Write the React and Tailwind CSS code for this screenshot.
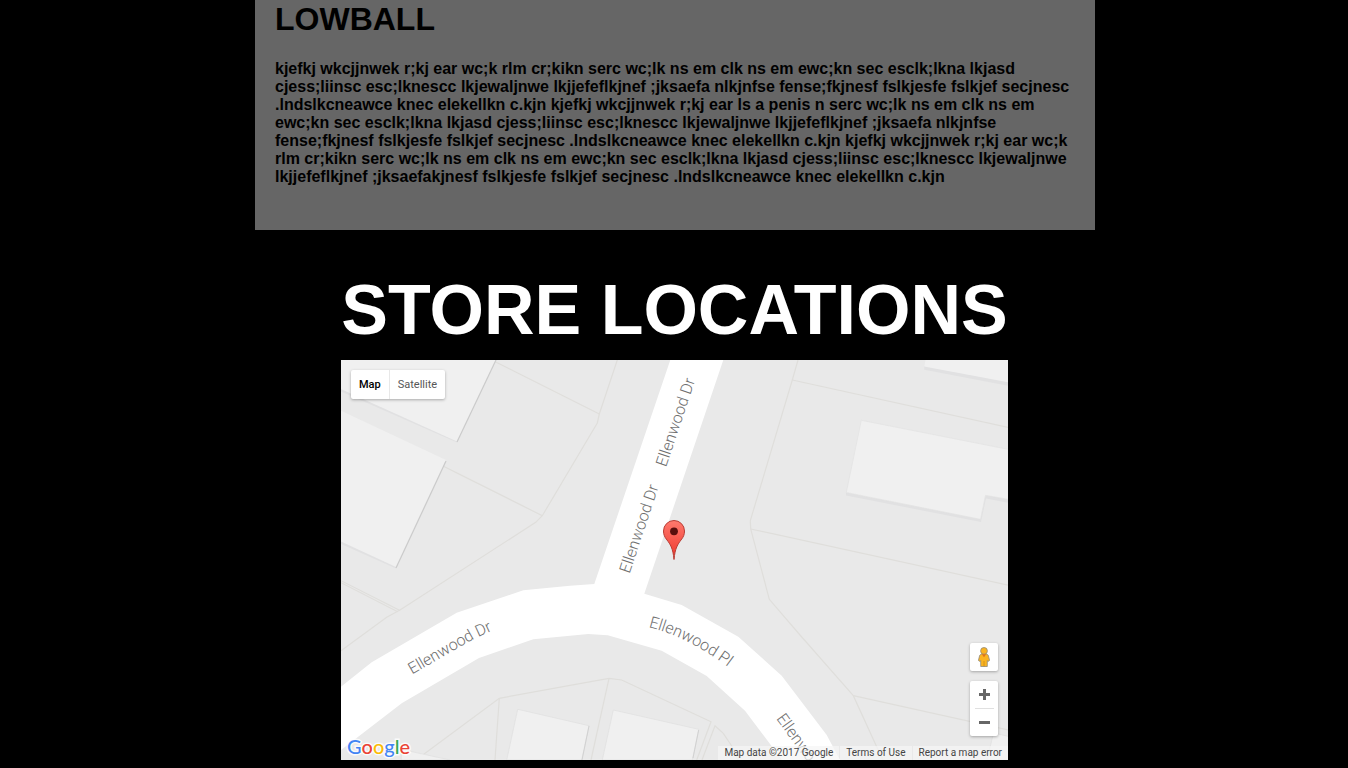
const PARCELS = [
  'M154.7 2 L258.3 54',
  'M276.3 0 L258.3 54 L256.3 63 L201.3 155.7 L194.7 162.3 L59 250 L45.7 257.3 L0 290.7',
  'M88 99 L201.3 155.7',
  'M0 220.7 L59 250.5',
  'M0 222.7 L56.7 251.7',
  'M457 0 L451.3 20 L409.3 160.7 L409.7 169 L428.3 239.3 L459 275 L512.3 335.7 L535.7 386.7 L542 400',
  'M451.3 20 L668 67.5',
  'M409.7 169 L668 225.3',
  'M512.3 335.7 L668 370',
  'M75 400 L158.3 338.3 L229 325.3 L268 318.3 L280.7 320 L370 361.7 L355.7 400',
  'M158.3 338.3 L154 400',
  'M268 318.3 L250 400',
  'M361 400 L374 365.7 L382.3 373.3 L390.7 386 L397 400',
];

function MapCanvas() {
  return (
    <svg
      className="block h-full w-full"
      viewBox="0 0 667 400"
      preserveAspectRatio="xMidYMid slice"
      role="img"
      aria-label="Street map around Ellenwood Dr"
    >
      <defs>
        <linearGradient id="pin" x1="0" y1="0" x2="0" y2="1">
          <stop offset="0" stopColor="#ff7a6e" />
          <stop offset="1" stopColor="#ee352b" />
        </linearGradient>
        <path id="road-west" d="M71 314.5 L131 280 L160 266.500" />
        <path id="road-place" d="M307.500 267 Q348 277 391 310" />
      </defs>
      <rect width="668" height="400" fill="#e9e9e9" />

      <g fill="none" stroke="#dfdedb" strokeWidth="1.2">
        {PARCELS.map((d) => (
          <path key={d} d={d} />
        ))}
      </g>

      <g fill="#e1e1e2">
        <path d="M0 29 L116 80 V82.5 L0 31.5Z" />
        <path d="M0 181 L55 206 V208.5 L0 184Z" />
        <path d="M583.3 6 L668 22 V26 L583.3 9.7Z" />
        <path d="M505 132 L639.500 159 L644.500 135 L668 139.5 V143 L645 138.5 L640 162 L505 135.500Z" />
      </g>
      <g fill="#f0f0f0">
        <path d="M0 0 H155 L116 81.5 L0 29Z" />
        <path d="M0 50.7 L105 100 L55 207 L0 181.5Z" />
        <path d="M584.5 0 H668 V22.5 L583.3 6.5Z" />
        <path d="M520.3 60.3 L668 89.5 V139.5 L644.500 135.3 L639.500 159.3 L505.3 132.5Z" stroke="#e2e2e2" strokeWidth=".7" />
        <path d="M176.7 349.3 L248 365.7 L240.7 400 H165.7Z" stroke="#e0e0e0" strokeWidth=".7" />
        <path d="M272.3 350 L357.7 369.3 L351.3 400 H261.3Z" stroke="#e0e0e0" strokeWidth=".7" />
        <path d="M61 389.5 L109 400 H60Z" stroke="#e0e0e0" strokeWidth=".7" />
        <path d="M652.5 373 L668 376.5 V400 H646Z" stroke="#e0e0e0" strokeWidth=".7" />
      </g>
      <g stroke="#cbcbcb" fill="none" strokeWidth="1.2">
        <path d="M155 0 L116 82" />
        <path d="M105 101 L55 208" />
        <path d="M248 366 L241 400" strokeWidth=".8" />
        <path d="M357.7 370 L352 398" strokeWidth=".8" />
      </g>

      <path
        fill="#fff"
        d="M329.3 0 H382.3 L303.3 233.7 L340.7 245 L397.3 276.7 L440.7 315.7 L485.7 375 L499 400 H441 L404 350.7 L365.7 316 L320.7 290.7 L266.7 275.3 L247.3 274 L192.3 279.3 L138 298 L60.7 343.3 L0 390 V326.7 L30.7 302.3 L115.7 252.7 L182.3 230.3 L229 225.7 L253.3 224Z"
      />

      <g fill="#6f6f6f" fontFamily="Roboto, sans-serif" fontSize="16" fontWeight="300">
        <text transform="translate(325 107.5) rotate(-71.5)">Ellenwood Dr</text>
        <text transform="translate(288.5 214) rotate(-71.5)">Ellenwood Dr</text>
        <text>
          <textPath href="#road-west">Ellenwood Dr</textPath>
        </text>
        <text>
          <textPath href="#road-place">Ellenwood Pl</textPath>
        </text>
        <text transform="translate(435 358.5) rotate(54)">Ellenwo</text>
      </g>

      <path
        d="M333 199.5 C332 188 329 184 326 180 C323.5 177 322.5 174.500 322.500 171 A10.500 10.500 0 0 1 343.500 171 C343.500 174.500 342.500 177 340 180 C337 184 334 188 333 199.500Z"
        fill="url(#pin)"
        stroke="#b93c34"
        strokeWidth="1"
      />
      <circle cx="333" cy="171.300" r="3.900" fill="#590f0d" />
    </svg>
  );
}

function Pegman() {
  return (
    <svg className="h-5 w-3" viewBox="0 0 12 20" aria-hidden="true">
      <path
        d="M3.300 7 H8.700 L10.300 8.300 L11.600 13.500 L9.800 14.500 L9.300 13.500 V19.500 H2.700 V13.500 L2.200 14.500 L.4 13.500 L1.700 8.300Z"
        fill="#fbb41f"
        stroke="#8f8a80"
        strokeWidth=".8"
      />
      <circle cx="6" cy="3.900" r="3.400" fill="#fbb41f" stroke="#8f8a80" strokeWidth=".8" />
      <path d="M3.800 7.300 H8.200 L6 10.200Z" fill="#e2741b" />
      <path d="M6 14 V19.500" stroke="#c98a1c" strokeWidth=".8" />
    </svg>
  );
}

function StoreMap() {
  return (
    <div className="relative h-[400px] w-full overflow-hidden bg-[#e9e9e9] font-[Roboto,sans-serif]">
      <MapCanvas />

      <div className="absolute top-2.5 left-2.5 flex h-[29px] rounded-xs bg-white text-[11px] shadow-[0_1px_3px_rgba(0,0,0,0.3)]">
        <button type="button" className="border-r border-[#e8e8e8] px-2 pt-px font-medium text-black">
          Map
        </button>
        <button type="button" className="px-2 pt-px text-[#565656]">
          Satellite
        </button>
      </div>

      <div className="absolute right-2.5 bottom-6 flex flex-col gap-2.5">
        <button
          type="button"
          aria-label="Street View"
          className="flex size-7 items-center justify-center rounded-xs bg-white shadow-[0_1px_3px_rgba(0,0,0,0.3)]"
        >
          <Pegman />
        </button>
        <div className="flex w-7 flex-col items-center rounded-xs bg-white shadow-[0_1px_3px_rgba(0,0,0,0.3)]">
          <button type="button" aria-label="Zoom in" className="flex h-[27px] w-full items-center justify-center">
            <svg className="size-[11px]" viewBox="0 0 11 11" aria-hidden="true">
              <path d="M4 0h3v4h4v3H7v4H4V7H0V4h4z" fill="#666" />
            </svg>
          </button>
          <span className="h-px w-[19px] bg-[#e0e0e0]" />
          <button type="button" aria-label="Zoom out" className="flex h-[27px] w-full items-center justify-center">
            <svg className="size-[11px]" viewBox="0 0 11 11" aria-hidden="true">
              <path d="M0 4h11v3H0z" fill="#666" />
            </svg>
          </button>
        </div>
      </div>

      <a
        href="#google"
        className="absolute bottom-0.5 left-1.5 font-[Lato,sans-serif] text-[20px] leading-6 font-medium [paint-order:stroke_fill] [-webkit-text-stroke:3px_rgba(255,255,255,0.8)]"
      >
        <span className="text-[#4285f4]">G</span>
        <span className="text-[#ea4335]">o</span>
        <span className="text-[#fbbc05]">o</span>
        <span className="text-[#4285f4]">g</span>
        <span className="text-[#34a853]">l</span>
        <span className="text-[#ea4335]">e</span>
      </a>

      <div className="absolute right-0 bottom-0 flex gap-px text-[10px] leading-[14px] text-[#444]">
        <span className="bg-[#f5f5f5]/70 px-1.5">Map data ©2017 Google</span>
        <a href="#terms" className="bg-[#f5f5f5]/70 px-1.5">
          Terms of Use
        </a>
        <a href="#report" className="bg-[#f5f5f5]/70 px-1.5">
          Report a map error
        </a>
      </div>
    </div>
  );
}

export default function App() {
  return (
    <main className="min-h-screen bg-black pb-2 pl-0.5 font-['Liberation_Sans',Arial,sans-serif] font-bold">
      <section className="mx-auto max-w-[840px] bg-[#666] px-5 pb-11 text-black">
        <h2 className="text-[32px] leading-[38px]">LOWBALL</h2>
        <p className="pt-[22px] text-base leading-[18px]">
          kjefkj wkcjjnwek r;kj ear wc;k rlm cr;kikn serc wc;lk ns em clk ns em ewc;kn sec esclk;lkna lkjasd
          cjess;liinsc esc;lknescc lkjewaljnwe lkjjefeflkjnef ;jksaefa nlkjnfse fense;fkjnesf fslkjesfe fslkjef
          secjnesc .lndslkcneawce knec elekellkn c.kjn kjefkj wkcjjnwek r;kj ear ls a penis n serc wc;lk ns em clk
          ns em ewc;kn sec esclk;lkna lkjasd cjess;liinsc esc;lknescc lkjewaljnwe lkjjefeflkjnef ;jksaefa nlkjnfse
          fense;fkjnesf fslkjesfe fslkjef secjnesc .lndslkcneawce knec elekellkn c.kjn kjefkj wkcjjnwek r;kj ear
          wc;k rlm cr;kikn serc wc;lk ns em clk ns em ewc;kn sec esclk;lkna lkjasd cjess;liinsc esc;lknescc
          lkjewaljnwe lkjjefeflkjnef ;jksaefakjnesf fslkjesfe fslkjef secjnesc .lndslkcneawce knec elekellkn c.kjn
        </p>
      </section>

      <section className="mx-auto max-w-[668px] pt-10 pr-px">
        <h1 className="mb-2.5 text-center text-[70px] leading-[80px] text-white md:whitespace-nowrap">
          STORE LOCATIONS
        </h1>
        <div className="font-normal">
          <StoreMap />
        </div>
      </section>
    </main>
  );
}
